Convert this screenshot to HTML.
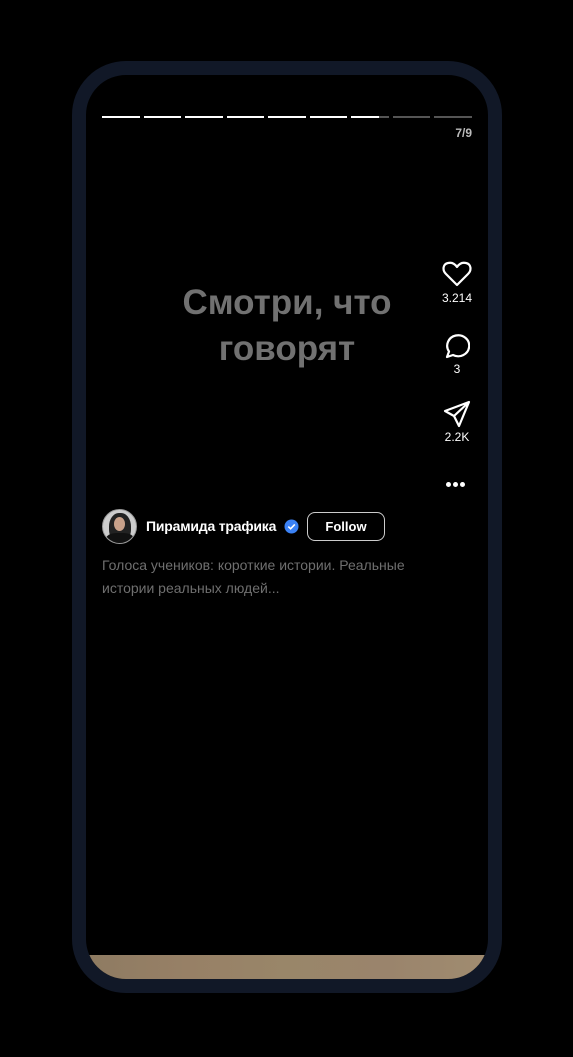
<!DOCTYPE html>
<html><head><meta charset="utf-8"><style>
html,body{margin:0;padding:0;background:#000;width:573px;height:1057px;overflow:hidden;font-family:"Liberation Sans",Arial,sans-serif}
.frame{position:absolute;left:72px;top:61px;width:402px;height:904px;border:14px solid #111827;border-radius:54px;background:#000;overflow:hidden}
.seg{position:absolute;top:41px;height:2px;background:#555}
.seg i{display:block;height:100%;background:#fff}
.lbl{position:absolute;color:#fff;font-size:12px;text-align:center;width:60px;left:341px}
</style></head><body>
<div class="frame">
  <div id="bars"></div>
  <div style="position:absolute;right:16px;top:51px;color:#bbb;font-size:12px;font-weight:bold">7/9</div>
  <div style="position:absolute;left:0;width:402px;text-align:center;top:205px;color:#717171;font-size:35px;font-weight:bold;line-height:46px">
    Смотри, что<br>говорят
  </div>
  <svg style="position:absolute;left:356px;top:185px" width="30" height="28" viewBox="0 0 30 28"><path d="M15 25 L4 14 C0 10 1 4 6 3 C10 2 13 4 15 7 C17 4 20 2 24 3 C29 4 30 10 26 14 Z" fill="none" stroke="#fff" stroke-width="2.2" stroke-linejoin="round"/></svg>
  <div class="lbl" style="top:216px">3.214</div>
  <svg style="position:absolute;left:356px;top:258px" width="28" height="28" viewBox="0 0 28 28"><path d="M5 24 L7 18.5 A11 10.5 0 1 1 11 22 Z" fill="none" stroke="#fff" stroke-width="2.2" stroke-linejoin="round"/></svg>
  <div class="lbl" style="top:287px">3</div>
  <svg style="position:absolute;left:356px;top:324px" width="30" height="30" viewBox="0 0 30 30"><path d="M27 3 L3 12 L12 17 L17 27 Z M12 17 L27 3" fill="none" stroke="#fff" stroke-width="2.2" stroke-linejoin="round"/></svg>
  <div class="lbl" style="top:355px">2.2K</div>
  <div style="position:absolute;left:360px;top:405px;line-height:6px">
    <span style="display:inline-block;width:5px;height:5px;border-radius:50%;background:#fff;margin-right:2px"></span><span style="display:inline-block;width:5px;height:5px;border-radius:50%;background:#fff;margin-right:2px"></span><span style="display:inline-block;width:5px;height:5px;border-radius:50%;background:#fff"></span>
  </div>
  <div style="position:absolute;left:16px;top:434px;width:33px;height:33px;border-radius:50%;background:#ccc;border:1px solid #999;overflow:hidden">
    <div style="position:absolute;left:6px;top:3px;width:22px;height:30px;border-radius:45%;background:#222"></div>
    <div style="position:absolute;left:11px;top:7px;width:11px;height:14px;border-radius:50%;background:#c9a18a"></div>
    <div style="position:absolute;left:3px;top:23px;width:28px;height:14px;border-radius:40%;background:#111"></div>
  </div>
  <div style="position:absolute;left:60px;top:443px;color:#fff;font-size:14px;font-weight:bold;letter-spacing:-0.2px">Пирамида трафика</div>
  <svg style="position:absolute;left:198px;top:444px" width="15" height="15" viewBox="0 0 15 15"><circle cx="7.5" cy="7.5" r="7" fill="#3b82f6"/><path d="M4.3 7.6 L6.6 9.8 L10.8 5.4" fill="none" stroke="#fff" stroke-width="1.6"/></svg>
  <div style="position:absolute;left:221px;top:437px;width:76px;height:27px;border:1px solid #ccc;border-radius:8px;color:#fff;font-size:13px;font-weight:bold;text-align:center;line-height:27px">Follow</div>
  <div style="position:absolute;left:16px;top:479px;width:320px;color:#6f6f6f;font-size:14px;line-height:23px">Голоса учеников: короткие истории. Реальные истории реальных людей...</div>
  <div style="position:absolute;left:0;top:880px;width:402px;height:24px;background:linear-gradient(90deg,#8e7b62,#978066,#998669,#9a846c,#a08c70)"></div>
</div>
<script>
var b=document.getElementById('bars'),h='';
for(var i=0;i<9;i++){var l=16+i*41.5;var f=i<6?100:(i==6?75:0);h+='<div class="seg" style="left:'+l+'px;width:37.5px"><i style="width:'+f+'%"></i></div>';}
b.innerHTML=h;
</script>
</body></html>
